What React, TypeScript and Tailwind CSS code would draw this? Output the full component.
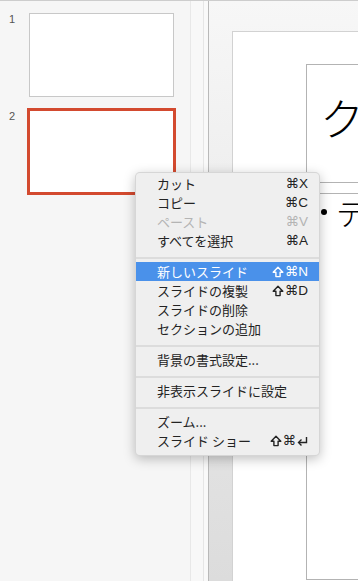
import { Fragment } from "react";

type MenuItem = {
  label: string;
  keys?: string;
  shift?: boolean;
  withReturn?: boolean;
  disabled?: boolean;
  active?: boolean;
};

const menuGroups: MenuItem[][] = [
  [
    { label: "カット", keys: "⌘X" },
    { label: "コピー", keys: "⌘C" },
    { label: "ペースト", keys: "⌘V", disabled: true },
    { label: "すべてを選択", keys: "⌘A" },
  ],
  [
    { label: "新しいスライド", keys: "⌘N", shift: true, active: true },
    { label: "スライドの複製", keys: "⌘D", shift: true },
    { label: "スライドの削除" },
    { label: "セクションの追加" },
  ],
  [{ label: "背景の書式設定..." }],
  [{ label: "非表示スライドに設定" }],
  [
    { label: "ズーム..." },
    { label: "スライド ショー", keys: "⌘", shift: true, withReturn: true },
  ],
];

function ShiftGlyph({ color }: { color: string }) {
  return (
    <svg width="12" height="12" viewBox="0 0 12 12" fill="none" className="mr-[1px]">
      <path
        d="M6 1.2L10.8 6.2H8.1V10.6H3.9V6.2H1.2Z"
        stroke={color}
        strokeWidth="1.4"
        strokeLinejoin="round"
      />
    </svg>
  );
}

function ReturnGlyph({ color }: { color: string }) {
  return (
    <svg width="11" height="10" viewBox="0 0 11 10" fill="none" className="ml-[1px]">
      <path d="M9.5 1v5.5H2" stroke={color} strokeWidth="1.4" />
      <path d="M4.5 3.5L1.5 6.5l3 3" stroke={color} strokeWidth="1.4" />
    </svg>
  );
}

function ContextMenu() {
  return (
    <div
      className="absolute left-[135px] top-[171px] w-[185px] rounded-[5px] border border-black/10 bg-[#efefef] pb-[5px] pt-[1px] shadow-[0_3px_12px_rgba(0,0,0,0.25)]"
      style={{ fontFamily: '"Noto Sans CJK JP", "Noto Sans", sans-serif' }}
    >
      {menuGroups.map((group, gi) => (
        <Fragment key={gi}>
          {gi > 0 && (
            <div className="h-[12px] pt-[7px]">
              <div className="h-[2px] w-full bg-[#dcdcdc]" />
            </div>
          )}
          {group.map((item) => {
            const color = item.active ? "#ffffff" : "#232323";
            return (
              <div
                key={item.label}
                className={
                  "flex h-[19px] items-center justify-between pl-[21px] pr-[11px] text-[13px] leading-none " +
                  (item.active
                    ? "bg-[#4a91ea] text-white"
                    : item.disabled
                      ? "text-[#b4b4b4]"
                      : "text-[#232323]")
                }
              >
                <span className="whitespace-pre">{item.label}</span>
                {item.keys && (
                  <span
                    className="flex items-center text-[13.5px]"
                    style={{ fontFamily: '"Liberation Sans", "DejaVu Sans", sans-serif' }}
                  >
                    {item.shift && <ShiftGlyph color={color} />}
                    {item.keys}
                    {item.withReturn && <ReturnGlyph color={color} />}
                  </span>
                )}
              </div>
            );
          })}
        </Fragment>
      ))}
    </div>
  );
}

export default function App() {
  return (
    <div
      className="relative flex h-[581px] w-[358px] flex-col overflow-hidden border-t border-[#cdcdcd] bg-[#f6f6f6]"
      style={{ fontFamily: '"Liberation Sans", "Noto Sans CJK JP", sans-serif' }}
    >
      <div className="flex min-h-0 flex-1">
        {/* slide list */}
        <div className="flex w-[191px] shrink-0 flex-col border-r border-[#e8e8e8] pt-[12px]">
          <div className="flex items-start">
            <span className="w-[29px] pl-[9px] pt-[1px] text-[11px] leading-[11px] text-[#555]">1</span>
            <div className="h-[84px] w-[145px] border border-[#c8c8c8] bg-white" />
          </div>
          <div className="mt-[11px] flex items-start">
            <span className="w-[27px] pl-[9px] pt-[3px] text-[11px] leading-[11px] text-[#555]">2</span>
            <div className="h-[87px] w-[149px] border-[3px] border-[#d34a2f] bg-white" />
          </div>
        </div>

        {/* splitter */}
        <div className="w-[13px] shrink-0 border-r border-[#e6e6e6] bg-[#f8f8f8]" />
        <div className="w-[5px] shrink-0 border-r border-[#b9b9b9] bg-[#f9f9f9]" />

        {/* canvas */}
        <div className="flex min-w-0 flex-1 bg-linear-to-b from-[#f7f7f7] to-[#dcdcdc] pl-[23px] pt-[30px]">
          <div className="flex min-w-0 flex-1 flex-col overflow-hidden border-l border-t border-[#d2d2d2] bg-white pl-[73px] pt-[32px]">
            <div className="h-[119px] w-[200px] shrink-0 border border-[#b3b3b3] pl-[13px] pt-[30px]">
              <span
                className="text-[44px] font-light leading-none text-black"
                style={{ fontFamily: '"Noto Sans CJK JP", sans-serif' }}
              >
                ク
              </span>
            </div>
            <div className="mt-[10px] h-[387px] w-[200px] shrink-0 border border-[#b3b3b3] pl-[14px] pt-[3px]">
              <div
                className="flex items-center gap-[9px] text-[30px] font-light leading-none text-black"
                style={{ fontFamily: '"Noto Sans CJK JP", sans-serif' }}
              >
                <span className="h-[6px] w-[6px] rounded-full bg-black" />
                <span>テ</span>
              </div>
            </div>
          </div>
        </div>
      </div>

      <ContextMenu />
    </div>
  );
}
